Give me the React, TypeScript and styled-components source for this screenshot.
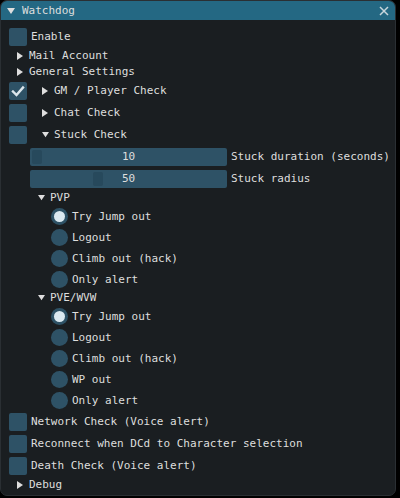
import React from "react";
import styled, { createGlobalStyle } from "styled-components";

const Global = createGlobalStyle`
  html, body { margin: 0; padding: 0; background: #000; }
  body { width: 400px; height: 498px; overflow: hidden; }
  * { box-sizing: border-box; }
`;

const FRAME = "#2e5266";
const TEXT = "#dedede";

const Window = styled.div`
  width: 396px;
  height: 496px;
  background: #1a1e21;
  border: 1px solid #2a2f33;
  border-radius: 7px;
  overflow: hidden;
  display: flex;
  flex-direction: column;
  font-family: "DejaVu Sans Mono", "Liberation Mono", monospace;
  font-size: 11px;
  color: ${TEXT};
`;

const TitleBar = styled.div`
  height: 19px;
  flex: none;
  background: #246883;
  display: flex;
  align-items: center;
  padding: 0 0 0 6px;
  gap: 7px;
`;

const TitleText = styled.span`
  flex: 1;
  line-height: 12px;
`;

const Close = styled.div`
  width: 19px;
  height: 19px;
  display: flex;
  align-items: center;
  justify-content: center;
  margin-right: 2px;
`;

const Body = styled.div`
  display: flex;
  flex-direction: column;
  gap: 4px;
  padding: 8px 8px 8px 8px;
`;

const Row = styled.div<{ $indent?: number }>`
  display: flex;
  align-items: center;
  gap: 4px;
  padding-left: ${(p) => p.$indent ?? 0}px;
`;

const Box = styled.div`
  width: 18px;
  height: 18px;
  flex: none;
  background: ${FRAME};
  border-radius: 2px;
  display: flex;
  align-items: center;
  justify-content: center;
`;

const Label = styled.span`
  line-height: 12px;
  white-space: nowrap;
`;

const Node = styled.div<{ $indent?: number; $arrowPad?: number }>`
  display: flex;
  align-items: center;
  height: 12px;
  padding-left: ${(p) => (p.$indent ?? 0) + (p.$arrowPad ?? 8)}px;
`;

const ArrowBox = styled.div`
  width: 12px;
  flex: none;
  display: flex;
  align-items: center;
`;

const SliderFrame = styled.div`
  position: relative;
  width: 197px;
  height: 18px;
  flex: none;
  background: ${FRAME};
  border-radius: 2px;
  display: flex;
  align-items: center;
  justify-content: center;
`;

const Grab = styled.div`
  position: absolute;
  top: 2px;
  bottom: 2px;
  width: 10px;
  background: #27495c;
  border-radius: 2px;
`;

const SliderValue = styled.span`
  position: relative;
  line-height: 12px;
`;

const Radio = styled.div<{ $on?: boolean }>`
  width: 17px;
  height: 17px;
  flex: none;
  border-radius: 50%;
  background: ${FRAME};
  display: flex;
  align-items: center;
  justify-content: center;
  &::after {
    content: "";
    display: ${(p) => (p.$on ? "block" : "none")};
    width: 11px;
    height: 11px;
    border-radius: 50%;
    background: #dbe9f0;
  }
`;

const RightArrow = () => (
  <svg width="6" height="8" viewBox="0 0 6 8">
    <path d="M0 0 L6 4 L0 8 Z" fill={TEXT} />
  </svg>
);
const DownArrow = ({ size = 7 }: { size?: number }) => (
  <svg width={size} height={size * 0.75} viewBox="0 0 8 6">
    <path d="M0 0 L8 0 L4 6 Z" fill={TEXT} />
  </svg>
);

const Check = () => (
  <svg width="14" height="14" viewBox="0 0 14 14">
    <path d="M2 7.5 L5.5 11 L12 3.5" stroke="#dbe6ec" strokeWidth="2.4" fill="none" strokeLinecap="square" />
  </svg>
);

const CheckBox = ({ on }: { on?: boolean }) => <Box>{on && <Check />}</Box>;

const Tree = ({ label, open, indent, pad }: { label: string; open?: boolean; indent?: number; pad?: number }) => (
  <Node $indent={indent} $arrowPad={pad}>
    <ArrowBox>{open ? <DownArrow /> : <RightArrow />}</ArrowBox>
    <Label>{label}</Label>
  </Node>
);

const Slider = ({ value, min, max, label }: { value: number; min: number; max: number; label: string }) => {
  const frac = (value - min) / (max - min);
  const left = 2 + frac * (197 - 4 - 10);
  return (
    <Row $indent={21}>
      <SliderFrame>
        <Grab style={{ left }} />
        <SliderValue>{value}</SliderValue>
      </SliderFrame>
      <Label>{label}</Label>
    </Row>
  );
};

const RadioItem = ({ label, on }: { label: string; on?: boolean }) => (
  <Row $indent={42}>
    <Radio $on={on} />
    <Label>{label}</Label>
  </Row>
);

export default function App() {
  return (
    <>
      <Global />
      <Window>
        <TitleBar>
          <DownArrow size={8} />
          <TitleText>Watchdog</TitleText>
          <Close>
            <svg width="10" height="10" viewBox="0 0 10 10">
              <path d="M1 1 L9 9 M9 1 L1 9" stroke="#c9d6dc" strokeWidth="1.5" />
            </svg>
          </Close>
        </TitleBar>
        <Body>
          <Row>
            <CheckBox />
            <Label>Enable</Label>
          </Row>
          <Tree label="Mail Account" />
          <Tree label="General Settings" />
          <Row>
            <CheckBox on />
            <Tree label="GM / Player Check" pad={11} />
          </Row>
          <Row>
            <CheckBox />
            <Tree label="Chat Check" pad={11} />
          </Row>
          <Row>
            <CheckBox />
            <Tree label="Stuck Check" open pad={11} />
          </Row>
          <Slider value={10} min={10} max={300} label="Stuck duration (seconds)" />
          <Slider value={50} min={0} max={150} label="Stuck radius" />
          <Tree label="PVP" open indent={21} />
          <RadioItem label="Try Jump out" on />
          <RadioItem label="Logout" />
          <RadioItem label="Climb out (hack)" />
          <RadioItem label="Only alert" />
          <Tree label="PVE/WVW" open indent={21} />
          <RadioItem label="Try Jump out" on />
          <RadioItem label="Logout" />
          <RadioItem label="Climb out (hack)" />
          <RadioItem label="WP out" />
          <RadioItem label="Only alert" />
          <Row>
            <CheckBox />
            <Label>Network Check (Voice alert)</Label>
          </Row>
          <Row>
            <CheckBox />
            <Label>Reconnect when DCd to Character selection</Label>
          </Row>
          <Row>
            <CheckBox />
            <Label>Death Check (Voice alert)</Label>
          </Row>
          <Tree label="Debug" />
        </Body>
      </Window>
    </>
  );
}
